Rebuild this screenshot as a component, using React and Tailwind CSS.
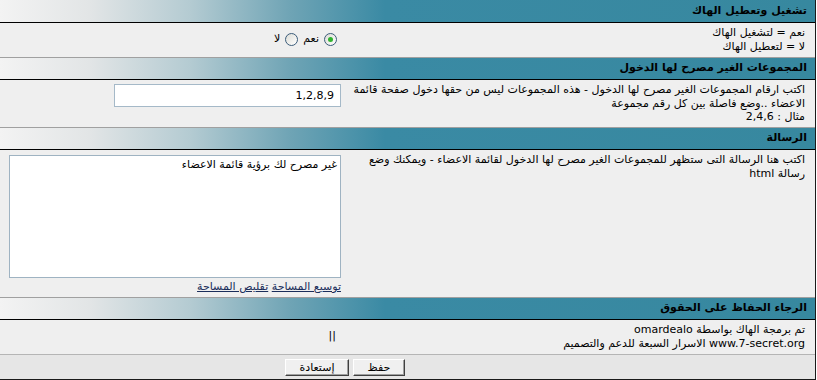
import React from 'react';

const headerBg =
  'bg-[linear-gradient(to_right,#f3f3f3_0px,#e2e5e6_90px,#b4cbd2_190px,#6fa4b5_290px,#3a8aa4_385px,#37889f_100%)]';

const Header = ({ children }) => (
  <div className={`${headerBg} border-b border-black border-t border-t-[#a0a0a0] h-[23px] flex items-center pr-[8px] font-bold`}>
    {children}
  </div>
);

const Row = ({ desc, children, className = '' }) => (
  <div className={`grid grid-cols-[470px_1fr] bg-[#efefef] ${className}`}>
    <div className="pr-[10px] pl-[4px] pt-[3px] leading-[13.5px]">{desc}</div>
    <div className="pr-[4px]">{children}</div>
  </div>
);

const Radio = ({ checked }) => (
  <span className="relative inline-block w-[13px] h-[13px] rounded-full border border-[#3b5c7a] bg-[linear-gradient(135deg,#dcdcd6,#ffffff)]">
    {checked && (
      <span className="absolute left-[3px] top-[3px] w-[5px] h-[5px] rounded-full bg-[#2fb32f]" />
    )}
  </span>
);

const Button = ({ children, className = '' }) => (
  <button className={`h-[17px] bg-[#f0f0f0] border border-t-white border-l-white border-r-[#404040] border-b-[#404040] shadow-[inset_-1px_-1px_0_#a0a0a0] text-[11px] leading-none ${className}`}>
    {children}
  </button>
);

export default function App() {
  return (
    <div
      dir="rtl"
      className="w-[816px] border-r border-r-[#1a1a1a] border-b border-b-[#1a1a1a] text-[11px] text-black bg-[#efefef]"
      style={{ fontFamily: '"DejaVu Sans", sans-serif' }}
    >
      <div className={`${headerBg} border-b border-black h-[23px] flex items-center pr-[8px] font-bold`}>
        تشغيل وتعطيل الهاك
      </div>
      <Row
        className="h-[34px]"
        desc={
          <>
            <div>نعم = لتشغيل الهاك</div>
            <div>لا = لتعطيل الهاك</div>
          </>
        }
      >
        <div className="flex items-center gap-[5px] pt-[8px] pr-[4px]">
          <Radio checked />
          <span>نعم</span>
          <Radio />
          <span>لا</span>
        </div>
      </Row>

      <Header>المجموعات الغير مصرح لها الدخول</Header>
      <Row
        className="h-[47px]"
        desc={
          <>
            <div>اكتب ارقام المجموعات الغير مصرح لها الدخول - هذه المجموعات ليس من حقها دخول صفحة قائمة الاعضاء ..وضع فاصلة بين كل رقم مجموعة</div>
            <div>مثال : 2,4,6</div>
          </>
        }
      >
        <div className="pt-[4px]">
          <input
            dir="rtl"
            defaultValue="1,2,8,9"
            className="w-[227px] h-[23px] border border-[#a5b9c8] bg-white px-[6px] text-[11px] outline-none"
            style={{ fontFamily: '"DejaVu Sans", sans-serif' }}
          />
        </div>
      </Row>

      <Header>الرسالة</Header>
      <Row
        className="h-[147px]"
        desc={<div>اكتب هنا الرسالة التى ستظهر للمجموعات الغير مصرح لها الدخول لقائمة الاعضاء - ويمكنك وضع رسالة html</div>}
      >
        <div className="pt-[5px]">
          <textarea
            dir="rtl"
            defaultValue="غير مصرح لك برؤية قائمة الاعضاء"
            className="block w-[332px] h-[123px] border border-[#9fb3c2] bg-white px-[3px] py-[1px] text-[11px] resize-none outline-none"
            style={{ fontFamily: '"DejaVu Sans", sans-serif' }}
          />
          <div className="mt-[1px] text-[#1a2d5a]">
            <a href="#" className="underline">توسيع المساحة</a>{' '}
            <a href="#" className="underline">تقليص المساحة</a>
          </div>
        </div>
      </Row>

      <Header>الرجاء الحفاظ على الحقوق</Header>
      <Row
        className="h-[34px]"
        desc={
          <>
            <div>تم برمجة الهاك بواسطة omardealo</div>
            <div>www.7-secret.org الاسرار السبعة للدعم والتصميم</div>
          </>
        }
      >
        <div className="pt-[8px] pr-[5px]">||</div>
      </Row>

      <div className="border-t border-[#b5b5b5] bg-[#e6e6e6] h-[25px] flex items-center gap-[4px] pr-[410px]">
        <Button className="w-[52px]">حفظ</Button>
        <Button className="w-[64px]">إستعادة</Button>
      </div>
    </div>
  );
}
